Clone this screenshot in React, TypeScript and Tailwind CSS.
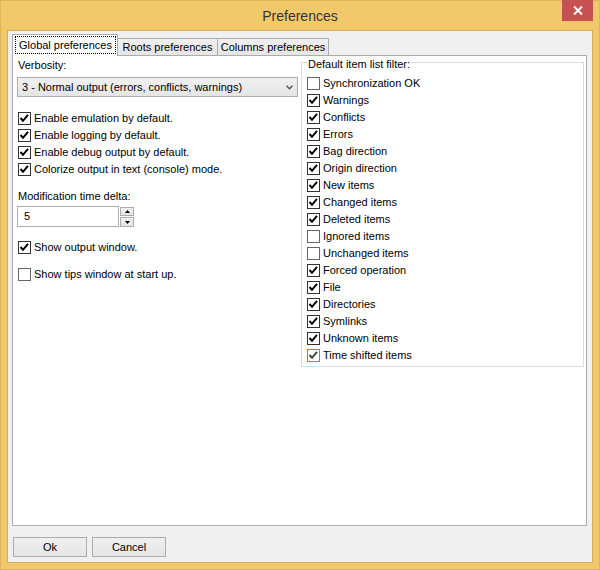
import clsx from 'clsx';

const filters: [string, boolean][] = [
  ['Synchronization OK', false],
  ['Warnings', true],
  ['Conflicts', true],
  ['Errors', true],
  ['Bag direction', true],
  ['Origin direction', true],
  ['New items', true],
  ['Changed items', true],
  ['Deleted items', true],
  ['Ignored items', false],
  ['Unchanged items', false],
  ['Forced operation', true],
  ['File', true],
  ['Directories', true],
  ['Symlinks', true],
  ['Unknown items', true],
  ['Time shifted items', true],
];

function Box({ checked, hot }: { checked: boolean; hot?: boolean }) {
  return (
    <span
      className={clsx(
        'flex h-[13px] w-[13px] shrink-0 items-center justify-center border bg-white',
        hot ? 'border-[#3399ff]' : checked ? 'border-[#333333]' : 'border-[#666666]'
      )}
    >
      {checked && (
        <svg width="11" height="11" viewBox="0 0 11 11">
          <path d="M1.5 5 L4 7.8 L9 1.8" fill="none" stroke={hot ? '#444' : '#000'} strokeWidth="2" />
        </svg>
      )}
    </span>
  );
}

function Check({ label, checked, hot }: { label: string; checked: boolean; hot?: boolean }) {
  return (
    <div className="flex h-[17px] items-center gap-[3px]">
      <Box checked={checked} hot={hot} />
      <span>{label}</span>
    </div>
  );
}

export default function App() {
  return (
    <div className="flex h-[570px] w-[600px] flex-col border border-[#dfb65e] bg-[#f1c96b] px-[6px] pb-[6px] font-['Liberation_Sans',Arial,sans-serif] text-[11px] leading-[13px] text-black">
      {/* Title bar */}
      <div className="relative flex h-[29px] shrink-0 items-center justify-center">
        <span className="text-[14px] leading-[16px] text-[#333333]">Preferences</span>
        <button className="absolute right-0 top-[-1px] flex h-[21px] w-[31px] items-center justify-center bg-[#c75050]">
          <svg width="10" height="9" viewBox="0 0 10 9">
            <path d="M1 0.5 L9 8.5 M9 0.5 L1 8.5" stroke="#fff" strokeWidth="2" />
          </svg>
        </button>
      </div>

      {/* Client area */}
      <div className="flex flex-1 flex-col border border-[#d5ad57] bg-[#f0f0f0] pl-[4px] pr-[5px] pt-[3px]">
        {/* Tabs */}
        <div className="flex h-[21px] shrink-0 items-end">
          <div className="relative z-10 mb-[-1px] h-[22px] w-[106px] border border-b-0 border-[#acacac] bg-white pl-[2px] pr-[1px] pt-[1px]">
            <div className="flex h-[18px] items-center justify-center border border-dotted border-black">
              Global preferences
            </div>
          </div>
          <div className="-ml-px flex h-[17px] w-[101px] items-center justify-center border border-b-0 border-[#acacac] bg-gradient-to-b from-[#f0f0f0] to-[#e5e5e5]">
            Roots preferences
          </div>
          <div className="-ml-px flex h-[17px] w-[112px] items-center justify-center border border-b-0 border-[#acacac] bg-gradient-to-b from-[#f0f0f0] to-[#e5e5e5]">
            Columns preferences
          </div>
        </div>

        {/* Panel */}
        <div className="flex h-[471px] w-[575px] shrink-0 border border-[#acacac] bg-white pl-[4px] pt-[3px]">
          {/* Left column */}
          <div className="flex w-[281px] flex-col">
            <div className="pl-px">Verbosity:</div>
            <div className="mt-[5px] flex h-[20px] items-center justify-between border border-[#acacac] bg-gradient-to-b from-[#f0f0f0] to-[#e5e5e5] pl-[4px] pr-[4px]">
              <span>3 - Normal output (errors, conflicts, warnings)</span>
              <svg width="7" height="5" viewBox="0 0 7 5">
                <path d="M0.5 0.8 L3.5 3.8 L6.5 0.8" fill="none" stroke="#555" strokeWidth="1.5" />
              </svg>
            </div>

            <div className="mt-[13px] flex flex-col pl-px">
              <Check label="Enable emulation by default." checked />
              <Check label="Enable logging by default." checked />
              <Check label="Enable debug output by default." checked />
              <Check label="Colorize output in text (console) mode." checked />
            </div>

            <div className="mt-[12px] pl-px">Modification time delta:</div>
            <div className="mt-[3px] flex h-[21px]">
              <div className="flex h-[21px] w-[102px] items-center border border-[#acacac] bg-white pl-[6px]">5</div>
              <div className="ml-px mt-px flex w-[14px] flex-col gap-px">
                <div className="flex h-[9px] items-center justify-center border border-[#acacac] bg-gradient-to-b from-[#f0f0f0] to-[#e5e5e5]">
                  <svg width="5" height="3" viewBox="0 0 5 3">
                    <path d="M0 3 L2.5 0 L5 3 Z" fill="#000" />
                  </svg>
                </div>
                <div className="flex h-[10px] items-center justify-center border border-[#acacac] bg-gradient-to-b from-[#f0f0f0] to-[#e5e5e5]">
                  <svg width="5" height="3" viewBox="0 0 5 3">
                    <path d="M0 0 L5 0 L2.5 3 Z" fill="#000" />
                  </svg>
                </div>
              </div>
            </div>

            <div className="mt-[12px] pl-px">
              <Check label="Show output window." checked />
            </div>
            <div className="mt-[10px] pl-px">
              <Check label="Show tips window at start up." checked={false} />
            </div>
          </div>

          {/* Filter group */}
          <div className="relative ml-[3px] mt-[3px] h-[305px] w-[283px] border border-[#dcdcdc] pl-[5px] pt-[12px]">
            <span className="absolute left-[5px] top-[-5px] bg-white px-px">Default item list filter:</span>
            {filters.map(([label, on], i) => (
              <Check key={label} label={label} checked={on} hot={i === filters.length - 1} />
            ))}
          </div>
        </div>

        {/* Buttons */}
        <div className="mt-[11px] flex gap-[5px] pl-px">
          <button className="flex h-[20px] w-[74px] items-center justify-center border border-[#acacac] bg-gradient-to-b from-[#f0f0f0] to-[#e5e5e5]">
            Ok
          </button>
          <button className="flex h-[20px] w-[74px] items-center justify-center border border-[#acacac] bg-gradient-to-b from-[#f0f0f0] to-[#e5e5e5]">
            Cancel
          </button>
        </div>
      </div>
    </div>
  );
}
